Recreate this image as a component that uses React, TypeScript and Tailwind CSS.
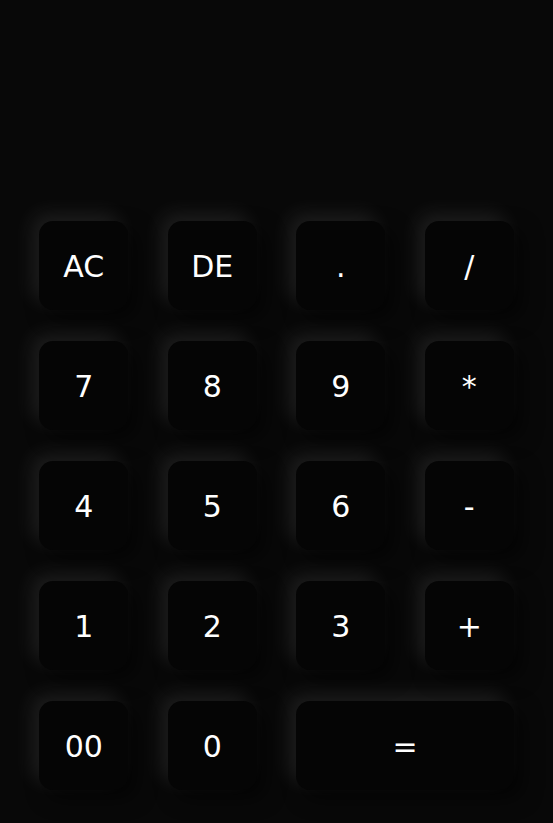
const keys: { label: string; wide?: boolean }[] = [
  { label: "AC" },
  { label: "DE" },
  { label: "." },
  { label: "/" },
  { label: "7" },
  { label: "8" },
  { label: "9" },
  { label: "*" },
  { label: "4" },
  { label: "5" },
  { label: "6" },
  { label: "-" },
  { label: "1" },
  { label: "2" },
  { label: "3" },
  { label: "+" },
  { label: "00" },
  { label: "0" },
  { label: "=", wide: true },
];

export default function App() {
  return (
    <div className="min-h-screen h-screen bg-[#080808] flex flex-col justify-end items-center pb-[33px] font-['DejaVu_Sans',Verdana,sans-serif]">
      <div className="grid grid-cols-[repeat(4,89px)] gap-x-[39.5px] gap-y-[31px]">
        {keys.map((k) => (
          <button
            key={k.label}
            className={`${
              k.wide ? "col-span-2" : ""
            } h-[89px] pt-[3px] rounded-[14px] bg-[#050505] text-white text-[30px] leading-none shadow-[-8px_-8px_20px_rgba(255,255,255,0.09),8px_8px_20px_rgba(0,0,0,0.6)]`}
          >
            {k.label}
          </button>
        ))}
      </div>
    </div>
  );
}
